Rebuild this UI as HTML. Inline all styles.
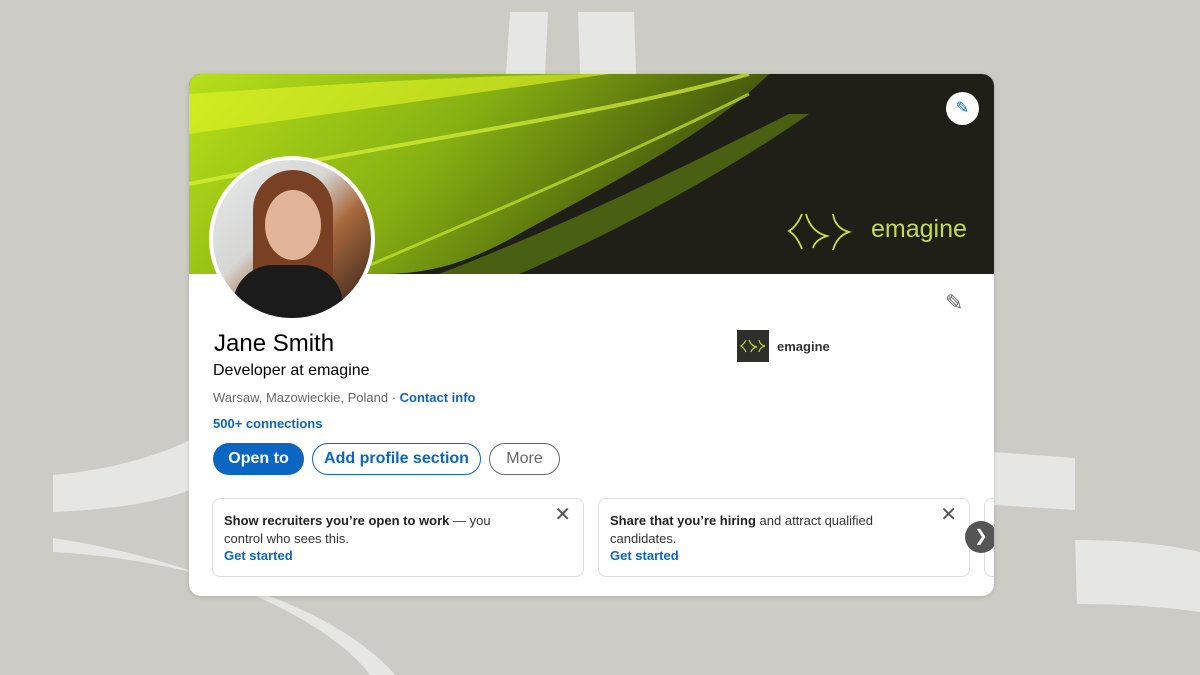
<!DOCTYPE html>
<html><head><meta charset="utf-8"><style>
*{margin:0;padding:0;box-sizing:border-box}
body{width:1200px;height:675px;background:#cccbc6;position:relative;overflow:hidden;font-family:"Liberation Sans",sans-serif}
.card{position:absolute;left:189px;top:74px;width:805px;height:522px;background:#fff;border-radius:12px;overflow:hidden;box-shadow:0 1px 4px rgba(0,0,0,.15)}
.banner{position:absolute;left:0;top:0;width:805px;height:200px;background:#201f17;overflow:hidden}
.t{position:absolute;color:#000}
.btn{position:absolute;top:369px;height:32px;border-radius:16px;font-size:16px;font-weight:bold;line-height:32px;text-align:center}
.sug{position:absolute;top:424px;height:79px;border:1px solid #ddd;border-radius:8px;font-size:13px;line-height:17.5px;color:#333;padding:13px 60px 0 11px}
.sug b{font-weight:bold;color:#222}
.sug a{color:#0a66c2;font-weight:bold;text-decoration:none;display:block}
.x{position:absolute;top:8px;right:12px;font-size:20px;color:#555}
</style></head><body>
<svg width="1200" height="675" style="position:absolute;left:0;top:0">
<g fill="#e6e6e4">
<path d="M510 12 L548 12 L545 74 L506 74 Z"/>
<path d="M578 12 L634 12 L636 74 L580 74 Z"/>
<path d="M53 475 C110 470 160 455 190 440 L190 490 C150 505 100 510 53 512 Z"/>
<path d="M53 538 C200 560 330 620 370 675 L395 675 C340 610 200 560 53 552 Z" />
<path d="M994 452 L1075 458 L1075 510 L994 505 Z"/>
<path d="M1075 540 C1130 540 1170 545 1200 552 L1200 612 C1160 606 1120 604 1077 604 Z"/>
</g>
</svg>
<div class="card">
<div class="banner">
<svg width="805" height="200">
<defs><linearGradient id="g" x1="0" y1="0" x2="1" y2="0.3"><stop offset="0" stop-color="#b6e01a"/><stop offset=".5" stop-color="#86b012"/><stop offset="1" stop-color="#3c4a0c"/></linearGradient></defs>
<path d="M0 0 L580 0 C520 60 420 110 330 160 C260 200 220 200 180 200 L0 200 Z" fill="url(#g)"/>
<path d="M0 20 C150 10 300 0 420 0 L0 60 Z" fill="#e4f526" opacity=".6"/>
<path d="M0 110 C200 70 420 40 560 0" stroke="#d9f23a" stroke-width="4" fill="none" opacity=".7"/>
<path d="M160 200 C300 140 440 80 560 20" stroke="#c8e82a" stroke-width="3" fill="none" opacity=".7"/>
<path d="M250 200 C380 150 500 90 600 40 L620 40 C520 110 400 170 330 200Z" fill="#5b7a10" opacity=".7"/>
<g stroke="#c5e23a" stroke-width="1.8" fill="none">
<path d="M613 140 Q608 152 600 157 Q608 162 613 175"/>
<path d="M617 140 Q622 158 638 162 Q626 166 624 174"/>
<path d="M644 140 Q646 154 660 158 Q648 162 644 176"/>
</g>
<text x="682" y="163" font-family="Liberation Sans" font-size="25" fill="#c2dc4a">emagine</text>
</svg>
<div style="position:absolute;left:757px;top:18px;width:33px;height:33px;border-radius:50%;background:#fff;color:#0a66c2;font-size:16px;text-align:center;line-height:33px">✎</div>
</div>
<div style="position:absolute;left:20px;top:82px;width:166px;height:166px;border-radius:50%;border:4px solid #fff;background:linear-gradient(135deg,#e8eaec 0%,#d6d6d4 40%,#a96a3e 60%,#2a1c16 100%);overflow:hidden">
<div style="position:absolute;left:40px;top:10px;width:80px;height:150px;border-radius:40px 40px 10px 10px;background:#7a4024"></div>
<div style="position:absolute;left:52px;top:30px;width:56px;height:70px;border-radius:50%;background:#e2b49a"></div>
<div style="position:absolute;left:20px;top:105px;width:110px;height:70px;border-radius:40px 40px 0 0;background:#1b1b1b"></div>
</div>
<div style="position:absolute;left:756px;top:216px;font-size:22px;color:#666">✎</div>
<div class="t" style="left:25px;top:256px;font-size:24px">Jane Smith</div>
<div class="t" style="left:24px;top:288px;font-size:16px">Developer at emagine</div>
<div class="t" style="left:24px;top:316px;font-size:13px;color:#666">Warsaw, Mazowieckie, Poland · <b style="color:#0a66c2">Contact info</b></div>
<div class="t" style="left:24px;top:342px;font-size:13px;color:#0a66c2;font-weight:bold">500+ connections</div>
<div style="position:absolute;left:548px;top:256px;width:32px;height:32px;background:#2e2e2a"><svg width="32" height="32"><g stroke="#b8d830" stroke-width="1.2" fill="none"><path d="M9 10 Q7 14 4 16 Q7 18 9 22"/><path d="M12 10 Q14 16 20 17 Q15 18 14 22"/><path d="M22 10 Q23 15 28 16 Q23 17 22 22"/></g></svg></div>
<div class="t" style="left:588px;top:265px;font-size:13px;font-weight:bold;color:#333">emagine</div>
<div class="btn" style="left:24px;width:91px;background:#0a66c2;color:#fff">Open to</div>
<div class="btn" style="left:123px;width:169px;border:1px solid #0a66c2;color:#0a66c2;line-height:30px">Add profile section</div>
<div class="btn" style="left:300px;width:71px;border:1px solid #666;color:#666;font-weight:normal;line-height:30px">More</div>
<div class="sug" style="left:23px;width:372px"><b>Show recruiters you’re open to work</b> — you control who sees this.<a>Get started</a><span class="x">✕</span></div>
<div class="sug" style="left:409px;width:372px"><b>Share that you’re hiring</b> and attract qualified candidates.<a>Get started</a><span class="x">✕</span></div>
<div class="sug" style="left:795px;width:40px;padding:0"></div>
<div style="position:absolute;left:776px;top:447px;width:32px;height:32px;border-radius:50%;background:#555;color:#fff;font-size:16px;line-height:32px;text-align:center">❯</div>
</div>
</body></html>
